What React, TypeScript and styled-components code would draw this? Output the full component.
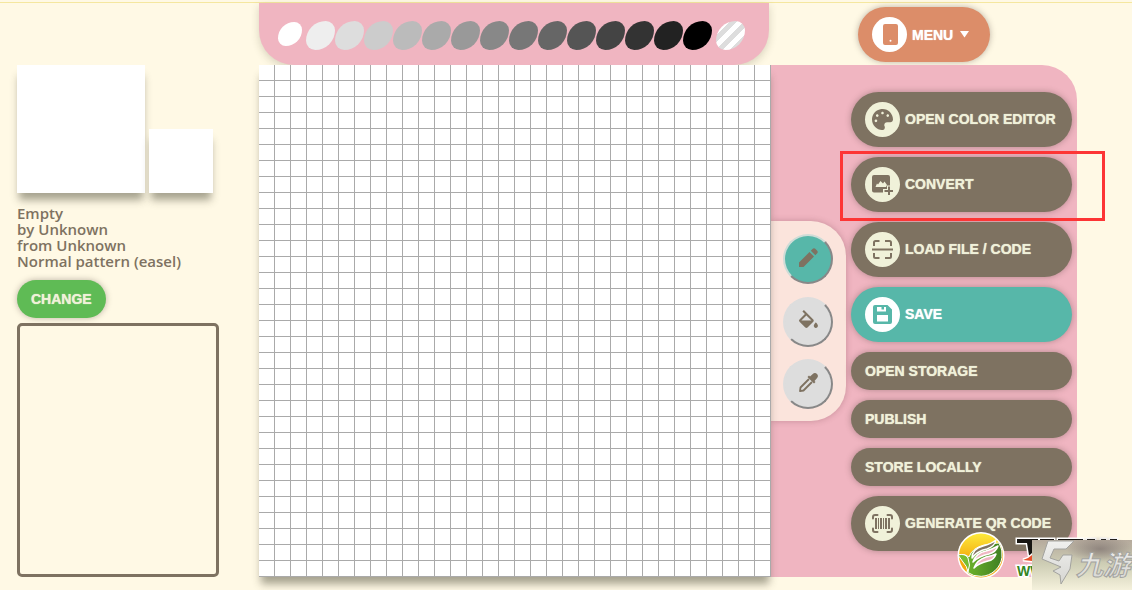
import React from 'react';
import styled, { createGlobalStyle, css } from 'styled-components';
import { FaPalette } from 'react-icons/fa';

const color = {
  cream: '#fff9e5',
  pink: '#f0b5c1',
  brown: '#7e7261',
  ivory: '#f0f1d9',
  teal: '#57b7a9',
  green: '#5fbb55',
  orange: '#dc8d69',
};

const dropShadow = '0 9px 8px -2px rgba(60, 60, 40, 0.45)';

const GlobalStyle = createGlobalStyle`
  *, *::before, *::after { box-sizing: border-box; }
  body {
    margin: 0;
    background: ${color.cream};
    color: ${color.brown};
    font-family: "Open Sans", "Noto Sans", sans-serif;
  }
`;

const columns = css`
  display: grid;
  grid-template-columns: minmax(202px, 1fr) 512px 306px;
  padding: 0 55px 0 17px;
`;

const Page = styled.div`
  position: relative;
  min-width: min-content;
  min-height: 100vh;
  padding: 2px 0 13px;
  overflow: hidden;
`;

const Header = styled.header`
  ${columns}
  border-top: 1px solid #f5e79f;
`;

const Palette = styled.div`
  grid-column: 2;
  display: flex;
  height: 62px;
  margin-right: 2px;
  padding: 18px 18px 0;
  border-radius: 0 0 35px 35px;
  background: ${color.pink};
  box-shadow: 0 3px 8px rgba(60, 60, 30, 0.2);
`;

const Swatch = styled.button<{ $fill: string; $selected?: boolean; $apart?: boolean }>`
  flex: none;
  width: ${(p) => (p.$selected ? 24 : 29)}px;
  height: ${(p) => (p.$selected ? 24 : 29)}px;
  margin: ${(p) => (p.$selected ? '1px 4px 0 1px' : p.$apart ? '0 0 0 4px' : '0')};
  padding: 0;
  border: 0;
  border-radius: 68% 32%;
  background: ${(p) => p.$fill};
`;

const MenuArea = styled.div`
  grid-column: 3;
  padding: 4px 0 0 87px;
`;

const Main = styled.main`
  ${columns}
`;

const Info = styled.aside`
  display: flex;
  flex-direction: column;
  align-items: flex-start;
  margin-right: 40px;
`;

const Previews = styled.div`
  display: flex;
  align-items: flex-end;
  gap: 4px;
`;

const Preview = styled.div<{ $size: number }>`
  width: ${(p) => p.$size}px;
  height: ${(p) => p.$size}px;
  background: #fff;
  box-shadow: ${dropShadow};
`;

const Details = styled.p`
  margin: 12px 0 11px;
  font-size: 15px;
  font-weight: 600;
  line-height: 16px;
`;

const Frame = styled.div`
  align-self: stretch;
  flex: 1;
  margin-top: 5px;
  border: 3px solid ${color.brown};
  border-radius: 5px;
`;

const Pixels = styled.div`
  position: relative;
  z-index: 1;
  height: 512px;
  background:
    repeating-linear-gradient(to right, transparent 0 15px, #aaa 15px 16px),
    repeating-linear-gradient(to bottom, #fff 0 15px, #aaa 15px 16px);
  box-shadow: ${dropShadow};
`;

const Side = styled.section`
  display: flex;
  align-items: center;
  gap: 5px;
  padding-right: 5px;
  border-radius: 0 35px 0 0;
  background: ${color.pink};
`;

const Tools = styled.div`
  display: flex;
  flex-direction: column;
  justify-content: space-between;
  width: 75px;
  height: 200px;
  padding: 13px 13px 12px 12px;
  border-radius: 0 35px 35px 0;
  background: #fbe4dc;
  box-shadow: 0 0 6px rgba(100, 50, 60, 0.3);
`;

const Tool = styled.button<{ $active?: boolean }>`
  display: flex;
  align-items: center;
  justify-content: center;
  width: 50px;
  height: 50px;
  padding: 0 0 4px;
  border: 2px solid;
  border-color: ${(p) => (p.$active ? '#cfdcd7' : '#ddd')} #888 #888 ${(p) => (p.$active ? '#cfdcd7' : '#ddd')};
  border-radius: 50%;
  background: ${(p) => (p.$active ? color.teal : '#ddd')};
  color: ${color.brown};
`;

const Actions = styled.div`
  display: flex;
  flex: 1;
  flex-direction: column;
  gap: 10px;
`;

const Pill = styled.button<{ $bg?: string; $fg?: string }>`
  display: flex;
  align-items: center;
  gap: 5px;
  min-height: 38px;
  padding: 10px 14px;
  border: 0;
  border-radius: 35px;
  background: ${(p) => p.$bg ?? color.brown};
  color: ${(p) => p.$fg ?? color.ivory};
  box-shadow: 0 0 6px rgba(60, 50, 40, 0.35);
  font: 700 14px/18px "Liberation Sans", Arial, sans-serif;
  text-shadow: 0 0 1px currentColor;
  text-transform: uppercase;
  white-space: nowrap;
`;

const Caret = styled.svg`
  margin: 0 6px 0 2px;
`;

const Badge = styled.span<{ $bg?: string; $fg?: string }>`
  display: flex;
  flex: none;
  align-items: center;
  justify-content: center;
  width: 35px;
  height: 35px;
  border-radius: 50%;
  background: ${(p) => p.$bg ?? color.ivory};
  color: ${(p) => p.$fg ?? color.brown};
`;

const Highlighted = styled.div`
  position: relative;
  display: grid;
`;

const Highlight = styled.span`
  position: absolute;
  z-index: 2;
  inset: -6px -33px -9px -11px;
  border: 3px solid #fd3535;
  pointer-events: none;
`;

const Watermark = styled.svg`
  position: absolute;
  z-index: 3;
  right: 0;
  bottom: 0;
  pointer-events: none;
`;

const Icon = ({ children }: { children: React.ReactNode }) => (
  <svg width="21" height="21" viewBox="0 0 21 21" fill="currentColor" aria-hidden="true">
    {children}
  </svg>
);

const TabletIcon = () => (
  <Icon>
    <path fillRule="evenodd" d="M6 0h11a2 2 0 0 1 2 2v17a2 2 0 0 1-2 2H6a2 2 0 0 1-2-2V2a2 2 0 0 1 2-2zm5.500 15.800a1 1 0 1 0 0 2 1 1 0 0 0 0-2z" />
  </Icon>
);

const ImagePlusIcon = () => (
  <Icon>
    <path fillRule="evenodd" d="M2 1h14a2 2 0 0 1 2 2v8.500h-3V15h-4v3.500H2a2 2 0 0 1-2-2V3a2 2 0 0 1 2-2zM3.500 13H14l1-2-2.500-3.500-1.500 2L8.500 7 6 10.500 5 9.500z" />
    <path d="M16 12.500h2V16h3v2h-3v3.500h-2V18h-3.500v-2H16z" />
  </Icon>
);

const ScanIcon = () => (
  <Icon>
    <path fill="none" stroke="currentColor" strokeWidth="2" d="M2 7V3.500Q2 2 3.500 2H7.500M13 2h4.500Q19 2 19 3.500V7M2 14v3.500Q2 19 3.500 19h4M13 19h4.500q1.500 0 1.500-1.500V14M0 10.500h21" />
  </Icon>
);

const SaveIcon = () => (
  <Icon>
    <path fillRule="evenodd" d="M3 1h12.500L20 5.500V18a2 2 0 0 1-2 2H3a2 2 0 0 1-2-2V3a2 2 0 0 1 2-2zm2 2v4.500h9V3h-2v2.500h-2.500V3zm0 8v6.500h11V11z" />
  </Icon>
);

const BarcodeIcon = () => (
  <Icon>
    <path fill="none" stroke="currentColor" strokeWidth="2" strokeLinecap="round" d="M1 5.500V4q0-2 2-2h2.500M15.500 2H18q2 0 2 2v1.500M1 15.500V17q0 2 2 2h2.500M15.500 19H18q2 0 2-2v-1.500" />
    <path d="M3 5h2v11H3zM6 5h1v11H6zM8 5h2v11H8zM11 5h1v11h-1zM13 5h2v11h-2zM16 5h2v11h-2z" />
  </Icon>
);

const PencilIcon = () => (
  <Icon>
    <path d="M1 20v-4.500L11.500 5l4.500 4.500L5.500 20zM12.800 3.700l1.700-1.700q1.500-1.500 3 0l1.500 1.500q1.500 1.500 0 3L17.300 8.200z" />
  </Icon>
);

const FillIcon = () => (
  <svg width="21" height="21" viewBox="2 -1 20 20" fill="currentColor" aria-hidden="true">
    <path d="M16.560 8.940L7.620 0 6.210 1.410l2.380 2.380-5.150 5.150a1.490 1.490 0 0 0 0 2.120l5.500 5.500c.29.29.68.44 1.060.44s.77-.15 1.060-.44l5.500-5.500c.59-.58.59-1.530 0-2.120zM5.210 10L10 5.210 14.790 10H5.210zM19 11.500s-2 2.170-2 3.500c0 1.100.9 2 2 2s2-.9 2-2c0-1.330-2-3.500-2-3.500z" />
  </svg>
);

const DropperIcon = () => (
  <Icon>
    <path d="M14.500 2.200Q17 0 19 2t-.3 4.500L16.500 9l1 1-1.500 1.500L9.500 5 11 3.500l1 1z" />
    <path fill="none" stroke="currentColor" strokeWidth="1.800" strokeLinejoin="round" d="M11 7L2.500 15.500 2 19.200l3.500-.7L14 10" />
  </Icon>
);

const greys = ['#eee', '#ddd', '#ccc', '#bbb', '#aaa', '#999', '#888', '#777', '#666', '#555', '#444', '#333', '#222', '#000'];
const stripes = 'repeating-linear-gradient(135deg, #ddd 0 5px, #fff 5px 10px)';

export default function App() {
  return (
    <Page>
      <GlobalStyle />
      <Header>
        <Palette>
          <Swatch $fill="#fff" $selected aria-label="White" />
          {greys.map((grey) => (
            <Swatch key={grey} $fill={grey} aria-label={grey} />
          ))}
          <Swatch $fill={stripes} $apart aria-label="Transparent" />
        </Palette>
        <MenuArea>
          <Pill $bg={color.orange} $fg="#fff">
            <Badge $bg="#fff" $fg={color.orange}><TabletIcon /></Badge>
            Menu
            <Caret width="10" height="8" viewBox="0 0 10 8" fill="currentColor" aria-hidden="true">
              <path d="M0 0h9L4.500 6.500z" />
            </Caret>
          </Pill>
        </MenuArea>
      </Header>

      <Main>
        <Info>
          <Previews>
            <Preview $size={128} />
            <Preview $size={64} />
          </Previews>
          <Details>
            Empty<br />
            by Unknown<br />
            from Unknown<br />
            Normal pattern (easel)
          </Details>
          <Pill $bg={color.green}>Change</Pill>
          <Frame />
        </Info>

        <Pixels />

        <Side>
          <Tools>
            <Tool $active aria-label="Pencil"><PencilIcon /></Tool>
            <Tool aria-label="Fill"><FillIcon /></Tool>
            <Tool aria-label="Pick color"><DropperIcon /></Tool>
          </Tools>
          <Actions>
            <Pill><Badge><FaPalette size={21} /></Badge>Open color editor</Pill>
            <Highlighted>
              <Pill><Badge><ImagePlusIcon /></Badge>Convert</Pill>
              <Highlight />
            </Highlighted>
            <Pill><Badge><ScanIcon /></Badge>Load file / code</Pill>
            <Pill $bg={color.teal} $fg="#fff">
              <Badge $bg="#fff" $fg={color.teal}><SaveIcon /></Badge>
              Save
            </Pill>
            <Pill>Open storage</Pill>
            <Pill>Publish</Pill>
            <Pill>Store locally</Pill>
            <Pill><Badge><BarcodeIcon /></Badge>Generate QR code</Pill>
          </Actions>
        </Side>
      </Main>

      <Watermark width="176" height="59" viewBox="0 0 176 59">
        <defs>
          <linearGradient id="sun" x1="0" y1="0" x2="0" y2="1">
            <stop offset="0" stopColor="#fdea3c" />
            <stop offset="0.6" stopColor="#f4a90c" />
          </linearGradient>
          <linearGradient id="leaf" x1="0" y1="0" x2="1" y2="0">
            <stop offset="0" stopColor="#78bf2c" />
            <stop offset="1" stopColor="#3f7f22" />
          </linearGradient>
          <linearGradient id="plate" x1="0" y1="0" x2="0" y2="1">
            <stop offset="0" stopColor="#b5aa9c" />
            <stop offset="0.5" stopColor="#cfcfb6" />
            <stop offset="1" stopColor="#f5f1dc" />
          </linearGradient>
          <linearGradient id="silver" x1="0" y1="0" x2="0" y2="1">
            <stop offset="0" stopColor="#f0f0ee" />
            <stop offset="1" stopColor="#d6d6d2" />
          </linearGradient>
          <radialGradient id="smudge">
            <stop offset="0" stopColor="#7c706e" />
            <stop offset="1" stopColor="#7c706e" stopOpacity="0" />
          </radialGradient>
        </defs>

        <circle cx="25" cy="24.500" r="23.500" fill="#fff" />
        <circle cx="25" cy="24.500" r="22" fill="url(#sun)" />
        <path d="M43 12A22 22 0 0 1 11 41Q13 34 9 30L3 24Q9 22 13 26Q16 17 28 14Q38 12 43 12z" fill="url(#leaf)" stroke="#fff" strokeWidth="1" />
        <g stroke="#fff" strokeWidth="1.500" strokeLinejoin="round">
          <path d="M16 27Q16 18 27 15Q35 13 40 9Q39 15 31 18Q21 20 16 27z" fill={color.brown} />
          <path d="M17 31Q20 22 30 20Q37 18 42 15Q40 21 33 23Q23 25 17 31z" fill={color.pink} />
          <path d="M18 37Q21 29 30 26Q36 25 40 23Q38 29 32 30Q23 32 18 37z" fill={color.pink} />
        </g>
        <path d="M2 24Q9 22 12 27Q15 34 12 41Q11 35 7 31z" fill="#79bd31" stroke="#fff" strokeWidth="1" />

        <g stroke="#fff" strokeWidth="3" paintOrder="stroke">
          <path d="M61 8h21v4h-5v17l-4-5-2-12H61zM84 8h14v4H84zM102 8h25v4h-25zM131 8h8v4h-8zM145 8h5v4h-5zM154 8h7v4h-7z" fill="#171512" />
          <path d="M67 29q5-1 9-5v6z" fill="#e8502a" />
          <text x="61" y="45" fill="#35851f" fontFamily="Liberation Sans" fontWeight="700" fontSize="14">WW</text>
        </g>

        <rect x="76" y="9" width="100" height="50" fill="url(#plate)" />
        <ellipse cx="144" cy="18" rx="34" ry="13" fill="url(#smudge)" opacity="0.700" />
        <g stroke="#a3a39f" strokeWidth="1" fill="url(#silver)">
          <path d="M92 10h26l-8 8H98l-4 9 9 3 4-6h9l-2 14-9 15-1-9-7-4 8-4-19-8z" />
          <text x="120" y="44" fontFamily="Noto Sans CJK SC" fontStyle="italic" fontWeight="700" fontSize="27">九游</text>
        </g>
      </Watermark>
    </Page>
  );
}
